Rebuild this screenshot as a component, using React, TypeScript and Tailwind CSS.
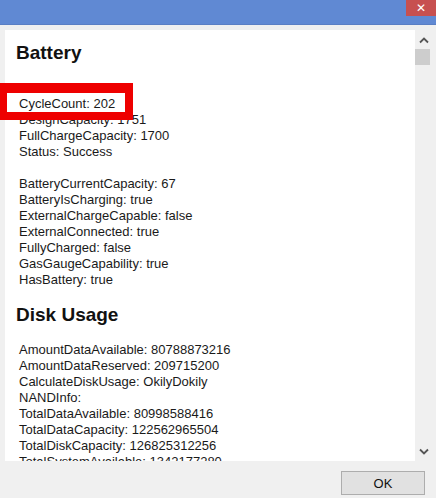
const battery = [
  "",
  "CycleCount: 202",
  "DesignCapacity: 1751",
  "FullChargeCapacity: 1700",
  "Status: Success",
  "",
  "BatteryCurrentCapacity: 67",
  "BatteryIsCharging: true",
  "ExternalChargeCapable: false",
  "ExternalConnected: true",
  "FullyCharged: false",
  "GasGaugeCapability: true",
  "HasBattery: true",
]

const disk = [
  "AmountDataAvailable: 80788873216",
  "AmountDataReserved: 209715200",
  "CalculateDiskUsage: OkilyDokily",
  "NANDInfo:",
  "TotalDataAvailable: 80998588416",
  "TotalDataCapacity: 122562965504",
  "TotalDiskCapacity: 126825312256",
  "TotalSystemAvailable: 1342177280",
]

const Section = ({ title, lines }: { title: string; lines: string[] }) => (
  <div className="flex flex-col">
    <h2 className="pl-[11px] text-[19px] leading-[24px] font-bold text-[#111] my-[15px]">
      {title}
    </h2>
    <div className="pl-[14px] flex flex-col">
      {lines.map((l, i) => (
        <div key={i} className="h-[16px] leading-[16px] text-[13px] text-[#1a1a1a] whitespace-nowrap">
          {l}
        </div>
      ))}
    </div>
  </div>
)

export default function App() {
  return (
    <div
      className="relative w-[436px] h-[498px] bg-[#f0f0f0] overflow-hidden flex flex-col"
      style={{ fontFamily: '"Liberation Sans", Arial, sans-serif' }}
    >
      <div className="h-[25px] bg-[#6089d3] flex justify-end shrink-0 border-b border-[#5a7fc4]">
        <div className="w-[30px] h-[16px] bg-[#c75050] flex items-center justify-center text-white text-[12px] leading-none">
          ✕
        </div>
      </div>

      <div className="flex mt-[5px] ml-[5px] h-[431px] w-[427px]">
        <div className="w-[410px] h-full bg-white overflow-hidden">
          <div className="-mt-[4px]">
            <Section title="Battery" lines={battery} />
            <Section title="Disk Usage" lines={disk} />
          </div>
        </div>
        <div className="w-[17px] h-full bg-[#f0f0f0] flex flex-col items-center">
          <svg width="10" height="7" viewBox="0 0 10 7" className="mt-[7px]">
            <path d="M1 5.5 L5 1.5 L9 5.5" fill="none" stroke="#555" strokeWidth="1.8" />
          </svg>
          <div className="w-[15px] h-[16px] bg-[#cdcdcd] mt-[5px] self-start" />
          <div className="flex-1" />
          <svg width="10" height="7" viewBox="0 0 10 7" className="mb-[6px]">
            <path d="M1 1.5 L5 5.5 L9 1.5" fill="none" stroke="#555" strokeWidth="1.8" />
          </svg>
        </div>
      </div>

      <div className="flex justify-end pr-[11px] pt-[10px]">
        <button className="w-[84px] h-[24px] bg-[#e1e1e1] border border-[#adadad] text-[13px] text-[#111] leading-none">
          OK
        </button>
      </div>

      <div className="absolute left-0 top-[83px] w-[133px] h-[37px] border-[#ee0000] border-t-[10px] border-l-[7px] border-r-[8px] border-b-[8px]" />
    </div>
  )
}
